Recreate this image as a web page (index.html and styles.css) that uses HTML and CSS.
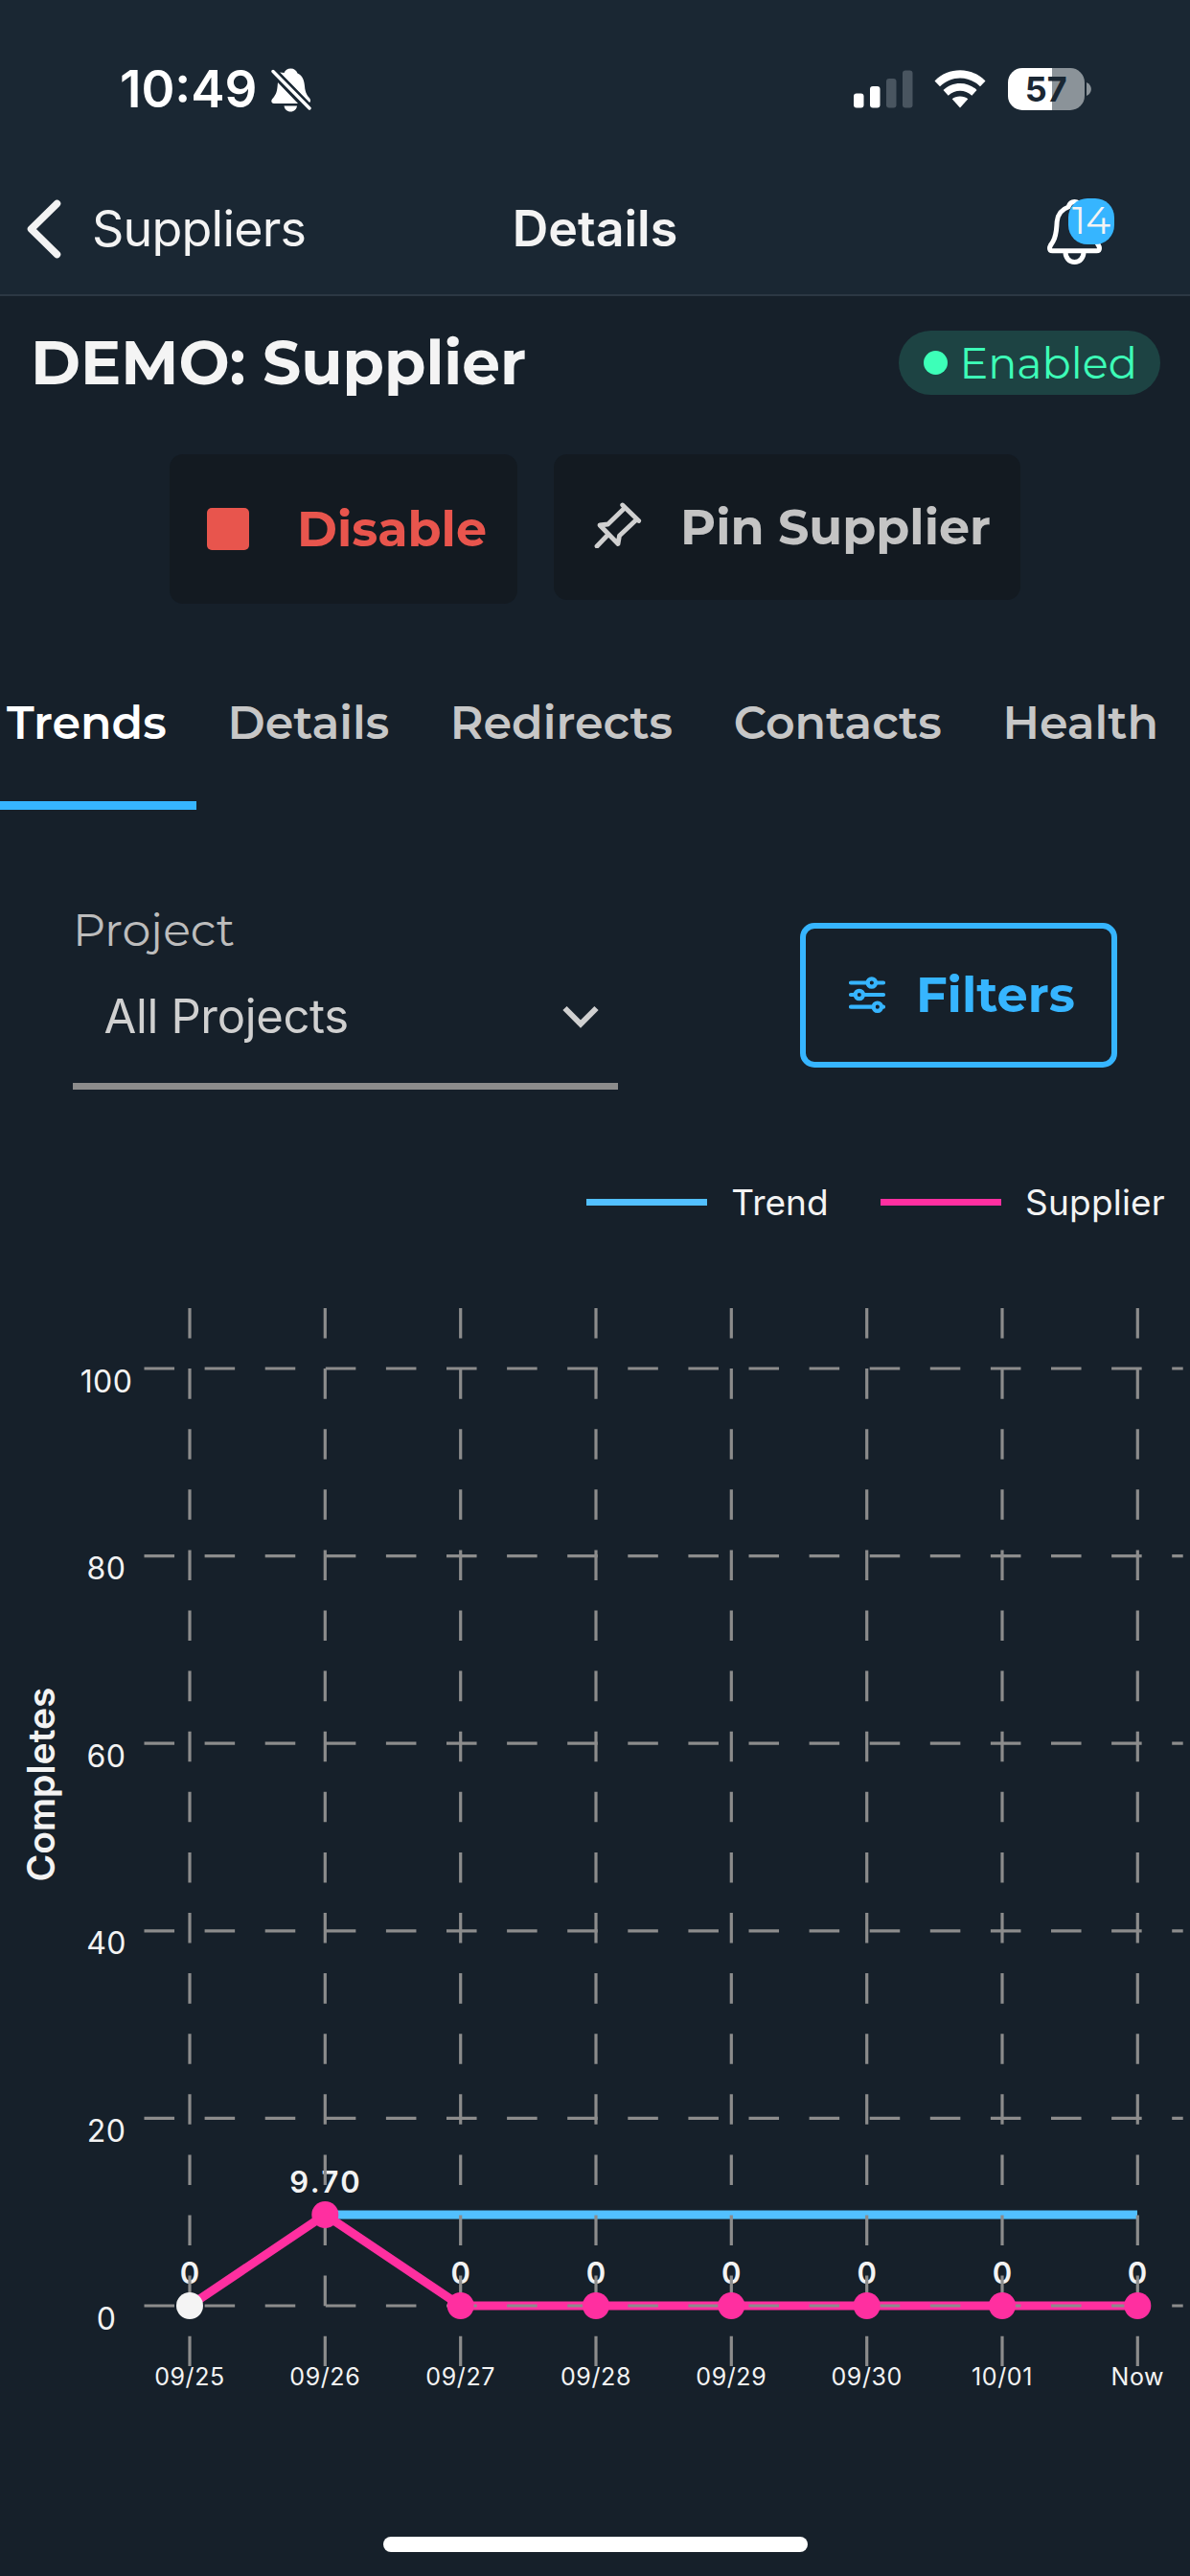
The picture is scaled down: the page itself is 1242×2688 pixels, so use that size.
FILE: index.html
```html
<!DOCTYPE html>
<html lang="en">
<head>
<meta charset="utf-8">
<title>Supplier details</title>
<link rel="stylesheet" href="styles.css">
</head>
<body>
<div class="screen">
  <header class="header">
    <div class="status">
      <div class="status-left">
        <span class="time">10:49</span>
        <svg class="muted" viewBox="0 0 42 46" width="42" height="46">
          <path d="M20.500 0.500C24 0.500 26.500 2.500 27.500 5.500C33 8 34.500 13 35 19C35.500 26 38 29 40.500 32C41.500 34 41 36 39.500 36L9 4.500C10.500 4.800 12 4.600 13.500 5C14.500 2.500 17 0.500 20.500 0.500Z" fill="#fff"/>
          <path d="M7 15L28 37H3C0.500 37 -0.500 34.500 1 32.500C4 29 6 26 6.500 20Z" fill="#fff"/>
          <path d="M13.500 39.500H27C26.500 43 24 45.500 20.300 45.500C16.500 45.500 14 43 13.500 39.500Z" fill="#fff"/>
          <path d="M2 3.500L40 42" stroke="#1a2733" stroke-width="8.500"/>
          <path d="M2 3.500L40 42" stroke="#fff" stroke-width="3.400" stroke-linecap="round"/>
        </svg>
      </div>
      <div class="status-right">
        <svg viewBox="0 0 62 40" width="62" height="40">
          <rect x="0" y="24.500" width="10.500" height="15" rx="3" fill="#fff"/>
          <rect x="17" y="17" width="10.500" height="22.500" rx="3" fill="#fff"/>
          <rect x="34" y="9" width="10.500" height="30.500" rx="3" fill="#495560"/>
          <rect x="51" y="0.500" width="10.500" height="39" rx="3" fill="#495560"/>
        </svg>
        <svg class="wifi" viewBox="0 0 54 40" width="54" height="40">
          <path d="M0.500 11.500C15 -3.400 39 -3.400 53.500 11.500L48 17.300C36 5.500 18 5.500 6 17.300Z" fill="#fff"/>
          <path d="M9.500 21C19 11.500 35 11.500 44.500 21L39.300 26.700C32 20 22 20 14.700 26.700Z" fill="#fff"/>
          <path d="M18.700 30.300C23 26.500 31 26.500 35.300 30.300L27 39.500Z" fill="#fff"/>
        </svg>
        <div class="battery"><span>57</span></div>
        <svg class="battery-tip" viewBox="0 0 5 14" width="5" height="14"><path d="M0 0C6.500 3 6.500 11 0 14Z" fill="#8b9399"/></svg>
      </div>
    </div>
    <nav class="nav">
      <a class="back">
        <svg viewBox="0 0 36 62" width="36" height="62"><path d="M31.500 4.500L4.500 31L31.500 57.500" fill="none" stroke="#f3f3f3" stroke-width="7.500" stroke-linecap="round" stroke-linejoin="round"/></svg>
        <span>Suppliers</span>
      </a>
      <h1>Details</h1>
      <div class="alerts">
        <svg viewBox="0 0 58 68" width="58" height="68" fill="none" stroke="#fff" stroke-width="5" stroke-linejoin="round">
          <path d="M28.500 2.500C24.500 2.500 23 5 22 8C15 10.500 11 15.500 10.200 23C9.500 31 10 37 6 44C4 47.500 2.500 48.500 2.500 51C2.500 53 3.500 53.800 5.500 53.800H51.500C53.500 53.800 54.500 53 54.500 51C54.500 48.500 53 47.500 51 44C47 37 47.500 31 46.800 23C46 15.500 42 10.500 35 8C34 5 32.500 2.500 28.500 2.500Z"/>
          <path d="M19 55C19 61 23 65.500 28.500 65.500C34 65.500 38 61 38 55"/>
        </svg>
        <span class="badge">14</span>
      </div>
    </nav>
  </header>

  <main class="main">
    <section class="title-row">
      <h2>DEMO: Supplier</h2>
      <span class="pill"><i class="dot"></i>Enabled</span>
    </section>

    <section class="actions">
      <button class="action danger"><i class="stop"></i>Disable</button>
      <button class="action pin">
        <svg viewBox="0 0 50 50" width="50" height="50" fill="none" stroke="#d0d0d0" stroke-width="4.800" stroke-linecap="round" stroke-linejoin="round">
          <path d="M29.700 5L46.700 21.500M32 8L14.500 25L6 26L25 45.500L26.500 37L44 20.500M15 35.500L3 48"/>
        </svg>
        Pin Supplier
      </button>
    </section>

    <section class="tabs">
      <a class="tab active">Trends</a>
      <a class="tab">Details</a>
      <a class="tab">Redirects</a>
      <a class="tab">Contacts</a>
      <a class="tab">Health</a>
    </section>

    <section class="controls">
      <div class="field">
        <label>Project</label>
        <div class="select">
          <span>All Projects</span>
          <svg viewBox="0 0 38 24" width="38" height="24"><path d="M2.500 3L19 19.500L35.500 3" fill="none" stroke="#d0d0d0" stroke-width="6"/></svg>
        </div>
      </div>
      <button class="filters">
        <svg viewBox="0 0 40 40" width="40" height="40" fill="none" stroke="#36b5ff" stroke-width="4.200" stroke-linecap="round">
          <path d="M3 7.500H20.500M29 7.500H37M3 20H7.500M16 20H37M3 32.700H26.500M35 32.700H37"/>
          <circle cx="24.800" cy="7.500" r="4.200"/><circle cx="11.800" cy="20" r="4.200"/><circle cx="30.800" cy="32.700" r="4.200"/>
        </svg>
        Filters
      </button>
    </section>

    <section class="legend">
      <i class="swatch trend"></i><span>Trend</span>
      <i class="swatch supplier"></i><span>Supplier</span>
    </section>

    <svg class="chart" viewBox="0 1285 1242 1255" width="1242" height="1255">
      <g fill="none" stroke-width="9">
        <path d="M339.300 2311H1187" stroke="#52c0ff"/>
        <path d="M198 2406L339.300 2311L480.700 2406H1187" stroke="#ff2fa0"/>
      </g>
      <g class="value">
        <text x="198" y="2383">0</text>
        <text x="340.300" y="2288" letter-spacing="2.500">9.70</text>
        <text x="480.700" y="2383">0</text>
        <text x="622" y="2383">0</text>
        <text x="763.300" y="2383">0</text>
        <text x="904.700" y="2383">0</text>
        <text x="1046" y="2383">0</text>
        <text x="1187" y="2383">0</text>
      </g>
      <g class="grid">
        <path d="M150.500 1428H1234.700M150.500 1623.600H1234.700M150.500 1819.200H1234.700M150.500 2014.800H1234.700M150.500 2210.400H1234.700M150.500 2406H1234.700"/>
        <path d="M198 1365V2469M339.300 1365V2469M480.700 1365V2469M622 1365V2469M763.300 1365V2469M904.700 1365V2469M1046 1365V2469M1187.300 1365V2469"/>
      </g>
      <g fill="#ff2fa0">
        <circle cx="198" cy="2406" r="14" fill="#f4f4f4"/>
        <circle cx="339.300" cy="2311" r="14"/>
        <circle cx="480.700" cy="2406" r="14"/>
        <circle cx="622" cy="2406" r="14"/>
        <circle cx="763.300" cy="2406" r="14"/>
        <circle cx="904.700" cy="2406" r="14"/>
        <circle cx="1046" cy="2406" r="14"/>
        <circle cx="1187.300" cy="2406" r="14"/>
      </g>
      <g class="y-label">
        <text x="111" y="1452.500">100</text>
        <text x="111" y="1648">80</text>
        <text x="111" y="1843.500">60</text>
        <text x="111" y="2039">40</text>
        <text x="111" y="2234.500">20</text>
        <text x="111" y="2430.500">0</text>
      </g>
      <g class="x-label">
        <text x="198" y="2489">09/25</text>
        <text x="339.300" y="2489">09/26</text>
        <text x="480.700" y="2489">09/27</text>
        <text x="622" y="2489">09/28</text>
        <text x="763.300" y="2489">09/29</text>
        <text x="904.700" y="2489">09/30</text>
        <text x="1046" y="2489">10/01</text>
        <text x="1187.300" y="2489">Now</text>
      </g>
      <text class="axis-title" transform="translate(57 1862) rotate(-90)">Completes</text>
    </svg>
  </main>
  <div class="home-bar"></div>
</div>
</body>
</html>
```
FILE: styles.css
```css
* { box-sizing: border-box; margin: 0; }
body { background: #16202a; font-family: Inter, "Liberation Sans", sans-serif; color: #f3f3f3; }
svg { display: block; flex: none; }
button { border: 0; font: inherit; padding: 0; }
.screen { width: 1242px; height: 2688px; display: flex; flex-direction: column; overflow: hidden; }

.header { height: 309px; background: #1a2733; border-bottom: 2px solid #2c3844; }
.status { height: 185px; display: flex; justify-content: space-between; align-items: center; padding: 0 103px 0 125px; }
.status-left, .status-right { display: flex; align-items: center; }
.time { font-size: 53px; font-weight: 600; color: #fff; }
.muted { margin-left: 15px; margin-top: 2px; }
.wifi { margin-left: 22px; }
.battery { margin-left: 23px; width: 79.500px; height: 44px; border-radius: 15px; background: linear-gradient(90deg, #fff 57.500%, #8b9399 57.500%); color: #1a2733; font-size: 36px; font-weight: 700; display: flex; align-items: center; justify-content: center; }
.battery-tip { margin-left: 2.500px; }
.nav { height: 107px; display: grid; grid-template-columns: 1fr auto 1fr; align-items: center; padding: 0 28px; }
.back { display: flex; align-items: center; gap: 32px; font-size: 52px; letter-spacing: -0.800px; }
.nav h1 { font-size: 52px; font-weight: 600; }
.alerts { justify-self: end; display: flex; position: relative; width: 71px; margin: 6px 50px 0 0; }
.badge { position: absolute; left: 22px; top: -1px; width: 48px; height: 48px; border-radius: 20px; background: #36b5ff; font: 400 39px/46px Montserrat, Inter, sans-serif; text-align: center; }

.main { font-family: Montserrat, Inter, sans-serif; }
.title-row { display: flex; justify-content: space-between; align-items: center; height: 103px; padding: 36px 31px 0 32px; }
.title-row h2 { font-size: 63px; font-weight: 700; line-height: 67px; color: #f4f4f4; }
.pill { display: flex; align-items: center; gap: 12.500px; width: 273px; height: 67px; padding-left: 25.500px; border-radius: 34px; background: #1d4343; color: #3dffb8; font-size: 44.500px; font-weight: 400; }
.dot { width: 25.500px; height: 25.500px; border-radius: 50%; background: #3dffb8; }

.actions { display: flex; justify-content: center; align-items: flex-start; gap: 38px; margin-top: 62px; height: 156px; }
.action { display: flex; align-items: center; border-radius: 14px; background: #131a21; font-size: 50.800px; font-weight: 700; white-space: nowrap; }
.danger { width: 362.500px; height: 156px; padding-left: 39px; gap: 50px; color: #e8554d; }
.stop { width: 44px; height: 44px; border-radius: 5px; background: #e8554d; }
.pin { width: 487.500px; height: 152px; padding-left: 42px; gap: 40.500px; color: #c4c4c4; }
.pin svg { margin-top: -6px; }

.tabs { display: flex; margin: 42px 0 0 -25px; white-space: nowrap; }
.tab { padding: 0 31.700px 0 32px; line-height: 164px; font-size: 47.500px; font-weight: 600; color: #c7c7c7; border-bottom: 9.500px solid transparent; }
.active { color: #fff; border-color: #36b5ff; }

.controls { display: flex; justify-content: space-between; align-items: flex-start; margin-top: 94.500px; padding: 0 76px; }
.field { width: 569px; height: 197px; border-bottom: 7px solid #8c8c8c; }
.field label { display: block; font-size: 47.500px; font-weight: 400; line-height: 60px; color: #bdbdbd; }
.select { height: 122px; display: flex; justify-content: space-between; align-items: center; padding: 0 20px 0 32.500px; color: #d0d0d0; font: 400 49px Inter, sans-serif; letter-spacing: -0.350px; }
.filters { width: 331px; height: 151px; margin-top: 23px; border: 6.500px solid #36b5ff; border-radius: 15px; background: none; color: #36b5ff; display: flex; align-items: center; gap: 31px; padding-left: 44px; font-size: 51px; font-weight: 700; }

.legend { display: flex; align-items: center; justify-content: flex-end; height: 60px; margin-top: 88px; padding-right: 26px; font: 400 37px Inter, sans-serif; }
.legend span:last-child { letter-spacing: 0.200px; }
.swatch { width: 126.500px; height: 6.500px; margin-right: 25px; }
.trend { background: #52c0ff; }
.supplier { background: #ff2fa0; margin-left: 54px; }

.chart { font-family: Inter, sans-serif; fill: #f3f3f3; text-anchor: middle; }
.grid { fill: none; stroke: #8c8c8c; stroke-width: 3.200; stroke-dasharray: 31.550; }
.value { font-size: 31px; font-weight: 600; }
.y-label { font-size: 32px; letter-spacing: 0.400px; }
.x-label { font-size: 25px; letter-spacing: 0.600px; }
.axis-title { font-size: 39px; font-weight: 600; }

.home-bar { width: 443px; height: 16px; border-radius: 8px; background: #fff; margin: auto auto 25px; flex: none; }
```
